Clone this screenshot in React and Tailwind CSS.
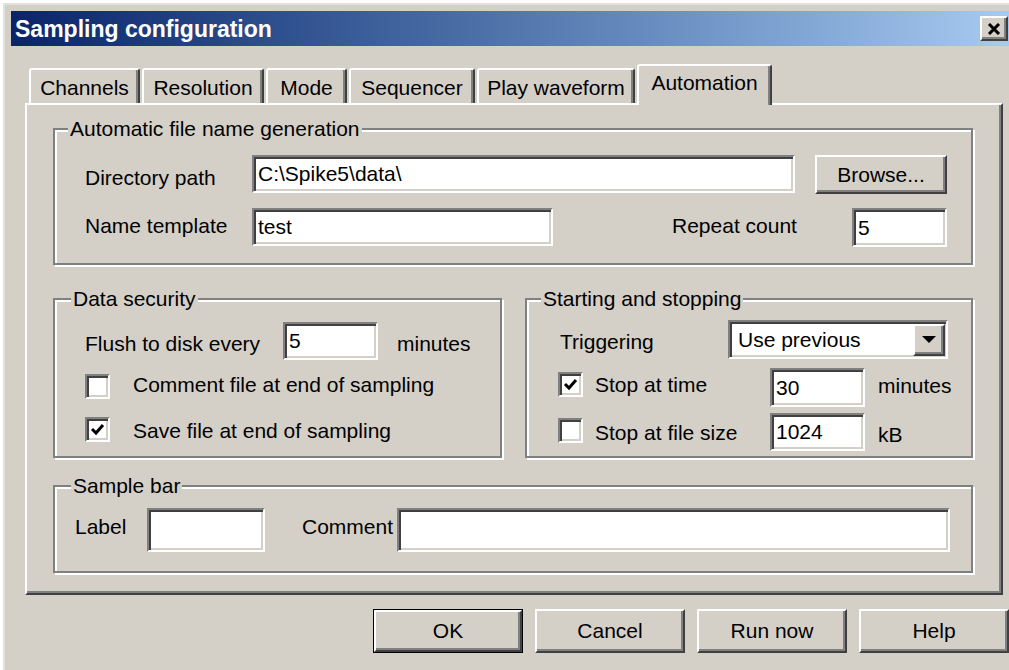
import React from "react";

// Classic 3D bevels
const raised =
  "border-2 border-t-white border-l-white border-r-[#404040] border-b-[#404040] shadow-[inset_-2px_-2px_0_#808080]";
const sunken =
  "border-2 border-t-[#808080] border-l-[#808080] border-r-white border-b-white shadow-[inset_2px_2px_0_#404040,inset_-2px_-2px_0_#d4d0c8]";

function Field({ value = "", className = "" }) {
  return (
    <div className={`${sunken} bg-white flex items-center pl-[4px] leading-[24px] whitespace-pre ${className}`}>
      {value}
    </div>
  );
}

function Button({ children, className = "" }) {
  return (
    <div className={`${raised} bg-[#d4d0c8] flex items-center justify-center leading-[24px] ${className}`}>
      {children}
    </div>
  );
}

function Check({ checked, className = "" }) {
  return (
    <div className={`${sunken} bg-white w-[25px] h-[25px] shrink-0 flex items-center justify-center ${className}`}>
      {checked && (
        <svg width="15" height="13" viewBox="0 0 15 13">
          <polyline points="2,6 6,10 13,2" fill="none" stroke="#000" strokeWidth="3" />
        </svg>
      )}
    </div>
  );
}

function Group({ title, legend, className = "", children }) {
  return (
    <div className={`relative border-2 border-[#808080] shadow-[inset_2px_2px_0_#ffffff,2px_2px_0_#ffffff] ${className}`}>
      <span className={`absolute top-[-13px] bg-[#d4d0c8] px-[2px] leading-[24px] whitespace-nowrap ${legend}`}>
        {title}
      </span>
      {children}
    </div>
  );
}

function Tab({ label, className = "" }) {
  return (
    <div
      className={`h-[35px] shrink-0 border-t-2 border-l-2 border-r-2 border-t-white border-l-white border-r-[#404040] rounded-tl-[3px] rounded-tr-[3px] shadow-[inset_-2px_0_0_#808080] text-center pt-[6px] leading-[24px] ${className}`}
    >
      {label}
    </div>
  );
}

export default function App() {
  return (
    <div className="w-[1009px] h-[670px] overflow-hidden bg-white text-black text-[21px] font-['Liberation_Sans',Arial,sans-serif]">
      <div className="ml-[3px] mt-[3px] w-[1013px] h-[700px] bg-[#d4d0c8] border-t-2 border-l-2 border-t-[#e4e1db] border-l-[#e4e1db] pt-[6px] pl-[6px] pr-[6px]">
        {/* Title bar */}
        <div className="h-[35px] flex items-center justify-between bg-linear-to-r from-[#0a246a] to-[#a6caf0] pl-[4px]">
          <span className="text-white font-bold text-[23px] leading-[28px]">Sampling configuration</span>
          <div className={`${raised} bg-[#d4d0c8] w-[28px] h-[25px] mr-[2px] flex items-center justify-center`}>
            <svg width="14" height="12" viewBox="0 0 14 12">
              <path d="M2 1 L12 11 M12 1 L2 11" stroke="#000" strokeWidth="3" />
            </svg>
          </div>
        </div>

        {/* Tab strip */}
        <div className="h-[57px] flex items-end pl-[18px]">
          <Tab label="Channels" className="w-[111px]" />
          <Tab label="Resolution" className="w-[122px] ml-[2px]" />
          <Tab label="Mode" className="w-[81px] ml-[2px]" />
          <Tab label="Sequencer" className="w-[126px] ml-[2px]" />
          <Tab label="Play waveform" className="w-[158px] ml-[2px]" />
          <div className="relative z-10 -mb-[2px] ml-[2px] w-[135px] h-[41px] shrink-0 bg-[#d4d0c8] border-t-2 border-l-2 border-r-2 border-t-white border-l-white border-r-[#404040] rounded-tl-[3px] rounded-tr-[3px] shadow-[inset_-2px_0_0_#808080] text-center pt-[5px] leading-[24px]">
            Automation
          </div>
        </div>

        {/* Tab page */}
        <div className="w-[978px] h-[492px] ml-[14px] border-2 border-t-white border-l-white border-r-[#404040] border-b-[#404040] shadow-[inset_-2px_-2px_0_#808080] pl-[26px] pt-[23px]">
          <Group title="Automatic file name generation" legend="left-[13px]" className="w-[920px] h-[137px]">
            <div className="pl-[30px] pt-[25px]">
              <div className="flex items-start">
                <span className="w-[167px] mt-[11px] leading-[24px]">Directory path</span>
                <Field className="w-[543px] h-[38px]" value={"C:\\Spike5\\data\\"} />
                <Button className="ml-[20px] w-[132px] h-[39px]">Browse...</Button>
              </div>
              <div className="flex items-start mt-[14px]">
                <span className="w-[167px] mt-[6px] leading-[24px]">Name template</span>
                <Field className="w-[301px] h-[38px]" value="test" />
                <span className="ml-[119px] w-[180px] mt-[6px] leading-[24px]">Repeat count</span>
                <Field className="w-[95px] h-[39px]" value="5" />
              </div>
            </div>
          </Group>

          <div className="flex gap-[23px] mt-[33px]">
            <Group title="Data security" legend="left-[16px]" className="w-[449px] h-[160px]">
              <div className="pl-[30px] pt-[22px]">
                <div className="flex items-start">
                  <span className="w-[198px] mt-[10px] leading-[24px]">Flush to disk every</span>
                  <Field className="w-[95px] h-[38px]" value="5" />
                  <span className="ml-[19px] mt-[10px] leading-[24px]">minutes</span>
                </div>
                <div className="flex items-start mt-[14px]">
                  <Check />
                  <span className="ml-[23px] mt-[-1px] leading-[24px]">Comment file at end of sampling</span>
                </div>
                <div className="flex items-start mt-[18px]">
                  <Check checked />
                  <span className="ml-[23px] mt-[2px] leading-[24px]">Save file at end of sampling</span>
                </div>
              </div>
            </Group>

            <Group title="Starting and stopping" legend="left-[14px]" className="w-[448px] h-[160px]">
              <div className="pl-[31px] pt-[20px]">
                <div className="flex items-start">
                  <span className="ml-[2px] w-[168px] mt-[10px] leading-[24px]">Triggering</span>
                  <div className={`${sunken} bg-white w-[220px] h-[39px] flex items-center pl-[8px]`}>
                    <span className="flex-1 leading-[24px]">Use previous</span>
                    <div className={`${raised} bg-[#d4d0c8] w-[32px] h-[32px] mr-[1px] flex items-center justify-center`}>
                      <svg width="14" height="8" viewBox="0 0 14 8">
                        <polygon points="0,0 14,0 7,7" fill="#000" />
                      </svg>
                    </div>
                  </div>
                </div>
                <div className="flex items-start mt-[9px]">
                  <Check className="mt-[4px]" checked />
                  <span className="ml-[12px] w-[175px] mt-[5px] leading-[24px]">Stop at time</span>
                  <Field className="w-[95px] h-[39px]" value="30" />
                  <span className="ml-[13px] mt-[6px] leading-[24px]">minutes</span>
                </div>
                <div className="flex items-start mt-[6px]">
                  <Check className="mt-[5px]" />
                  <span className="ml-[12px] w-[175px] mt-[8px] leading-[24px]">Stop at file size</span>
                  <Field className="w-[95px] h-[38px]" value="1024" />
                  <span className="ml-[13px] mt-[10px] leading-[24px]">kB</span>
                </div>
              </div>
            </Group>
          </div>

          <Group title="Sample bar" legend="left-[16px]" className="w-[920px] h-[88px] mt-[27px]">
            <div className="pl-[20px] pt-[21px] flex items-start">
              <span className="w-[72px] mt-[7px] leading-[24px]">Label</span>
              <Field className="w-[118px] h-[44px]" />
              <span className="ml-[37px] w-[95px] mt-[7px] leading-[24px]">Comment</span>
              <Field className="w-[553px] h-[44px]" />
            </div>
          </Group>
        </div>

        {/* Dialog buttons */}
        <div className="flex justify-end gap-[12px] mt-[14px] pr-[1px]">
          <div className="border border-black w-[150px] h-[44px]">
            <Button className="w-full h-full">OK</Button>
          </div>
          <Button className="w-[150px] h-[44px]">Cancel</Button>
          <Button className="w-[150px] h-[44px]">Run now</Button>
          <Button className="w-[150px] h-[44px]">Help</Button>
        </div>
      </div>
    </div>
  );
}
